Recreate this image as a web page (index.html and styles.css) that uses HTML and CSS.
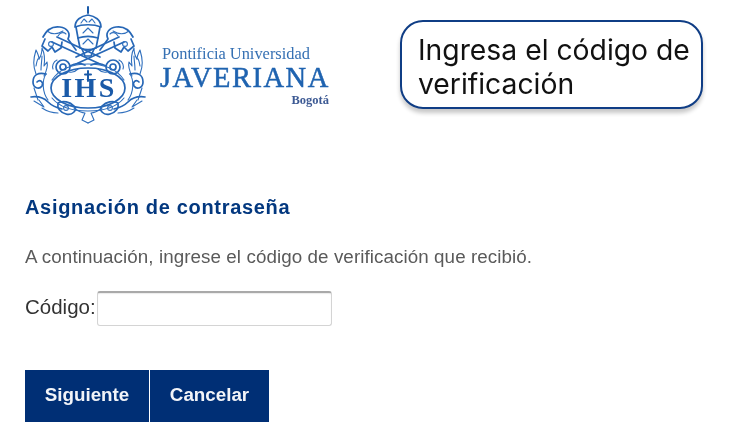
FILE: index.html
```html
<!DOCTYPE html>
<html lang="es">
<head>
<meta charset="utf-8">
<title>Asignación de contraseña</title>
<link rel="stylesheet" href="styles.css">
</head>
<body>
<header class="top">
  <div class="logo">
    <svg class="crest" viewBox="30 5 118 120" width="118" height="120" aria-hidden="true">
      <defs>
        <g id="half">
          <!-- key -->
          <path class="s2" d="M52 42 L100 64"/>
          <path class="s2" d="M57 37 L100 57"/>
          <path class="s2" d="M43 37 C47 29 53 26 60 27 C67 28 71 33 68 39 L76 50"/>
          <path class="s1" d="M47 31 C52 35 58 34 63 31 M58 36 C60 32 64 32 66 34"/>
          <path class="s2" d="M45 39 L42 46 L48 51 L52 47 L55 52 L61 48 L62 42"/>
          <circle class="s1" cx="51" cy="44" r="2.4"/>
          <!-- flames -->
          <path class="s1" d="M36 74 C33 66 33 60 36 50 C38 54 39 56 39 59 C41 56 42 52 42 48 C45 54 45 60 44 66 L47 62 C48 66 46 72 44 76"/>
          <path class="s1" d="M36 66 C37 60 38 58 39 59 M41 70 C41 64 42 60 42 56"/>
          <!-- scroll -->
          <path class="s2" d="M46 74 C38 72 33 75 33 82 C33 88 39 90 42 86 C44 82 40 79 37 82"/>
          <path class="s1" d="M46 74 C42 80 42 92 48 100 M34 88 L38 100"/>
          <!-- rose -->
          <circle class="s2" cx="63" cy="67" r="7"/>
          <circle class="s2" cx="63" cy="67" r="3"/>
          <path class="s1" d="M57 60 C53 62 52 66 53 69 M69 72 C73 73 76 71 78 69"/>
          <path class="s2" d="M70 66 C75 63 80 63 85 65"/>
          <!-- bottom ribbon -->
          <path class="s2" d="M31 97 C38 96 44 98 48 102 C52 106 58 108 62 109"/>
          <path class="s1" d="M34 101 L44 107 L39 100 M42 108 C48 112 54 113 58 113"/>
          <path class="s2" d="M58 103 C63 100 70 102 74 106 C78 110 72 116 66 114 C60 112 57 108 58 103Z"/>
          <circle class="s1" cx="66" cy="108" r="2.4"/>
          <path class="s1" d="M74 108 C78 111 82 113 85 113 L82 120 L88 123"/>
        </g>
      </defs>
      <!-- tiara -->
      <g>
        <path class="cross" d="M88 7 V13"/>
        <path class="s2" d="M75 27 C75 20 81 16 88 15 C95 16 101 20 101 27 C94 24 82 24 75 27Z"/>
        <path class="s2" d="M76 27 L78 38 C84 36 92 36 98 38 L100 27"/>
        <path class="s2" d="M78 38 L80 48 C85 50 91 50 96 48 L98 38"/>
        <path class="s1" d="M83 33 L88 28 L93 33 M83 44 L88 39 L93 44 M81 23 L84 19 L87 22 M95 23 L92 19 L89 22"/>
        <path class="s2" d="M82 49 L85 56 H91 L94 49"/>
      </g>
      <use href="#half"/>
      <use href="#half" transform="matrix(-1 0 0 1 176 0)"/>
      <!-- oval cartouche -->
      <ellipse class="s2" cx="88" cy="88" rx="37" ry="20"/>
      <path class="s1" d="M52 80 C60 68 74 64 88 64 M124 80 C116 68 102 64 88 64"/>
      <path class="s1" d="M52 98 C60 108 74 111 88 111 C102 111 116 108 124 98"/>
      <text class="ihs" x="89" y="97" text-anchor="middle">IHS</text>
      <path class="cross" d="M88 71 V81 M85 74.500 H91"/>
    </svg>
    <div class="wordmark">
      <span class="wm-top">Pontificia Universidad</span>
      <span class="wm-name">JAVERIANA</span>
      <span class="wm-city">Bogotá</span>
    </div>
  </div>
  <div class="callout">Ingresa el código de verificación</div>
</header>
<main class="content">
  <h1 class="title">Asignación de contraseña</h1>
  <p class="lead">A continuación, ingrese el código de verificación que recibió.</p>
  <form class="form">
    <div class="field">
      <label class="label" for="codigo">Código:</label>
      <input class="input" id="codigo" type="text">
    </div>
    <div class="actions">
      <button class="btn btn-first" type="button">Siguiente</button>
      <button class="btn btn-second" type="button">Cancelar</button>
    </div>
  </form>
</main>
</body>
</html>
```
FILE: styles.css
```css
* { box-sizing: border-box; }
html, body { margin: 0; padding: 0; background: #fff; }
body { width: 731px; height: 440px; overflow: hidden; font-family: "Liberation Sans", Arial, sans-serif; }

.top { display: flex; align-items: flex-start; padding: 5px 0 0 30px; height: 195px; }
.logo { display: flex; align-items: flex-start; width: 371px; }
.crest { display: block; flex: none; filter: blur(0.35px); }
.s1, .s2, .cross { fill: none; stroke: #2f6fbd; stroke-linecap: round; stroke-linejoin: round; }
.s1 { stroke-width: 1.1; }
.s2 { stroke-width: 1.7; stroke: #2767b6; }
.cross { stroke-width: 2; stroke: #1a5aa8; }
.ihs { font-family: "Liberation Serif", serif; font-weight: 700; font-size: 28px; letter-spacing: 2.5px; fill: #1a5aa8; }

.wordmark { display: flex; flex-direction: column; margin: 39px 0 0 12px; width: 172px; font-family: "Liberation Serif", serif; color: #2a67ad; filter: blur(0.3px); }
.wm-top { font-size: 16.4px; line-height: 20px; padding-left: 2px; white-space: nowrap; color: #3570b3; }
.wm-name { font-size: 28.500px; line-height: 27px; letter-spacing: 1.5px; white-space: nowrap; color: #1f63b0; -webkit-text-stroke: 0.5px #1f63b0; }
.wm-city { margin-top: 2px; font-size: 12.500px; line-height: 14px; font-weight: 700; text-align: right; padding-right: 3px; color: #3d5a94; }

.callout { width: 303px; height: 89px; margin: 15px 0 0 -1px; padding: 11px 8px 0 16px; border: 2px solid #0f3d85; border-radius: 23px; background: #fff; box-shadow: 0 4px 4px rgba(0, 0, 0, .22); font-family: Inter, sans-serif; font-size: 28.300px; line-height: 34px; color: #111; filter: blur(0.2px); }

.content { padding-left: 25px; filter: blur(0.25px); }
.title { margin: 0; font-size: 20px; line-height: 24px; font-weight: 700; letter-spacing: 0.68px; color: #03387f; }
.lead { margin: 28px 0 0; font-size: 18.800px; line-height: 20px; letter-spacing: 0.08px; color: #5a5a5a; }
.field { display: flex; align-items: center; margin-top: 24px; }
.label { font-size: 20.500px; line-height: 31px; padding-bottom: 4px; color: #333; width: 72px; }
.input { width: 235px; height: 35px; padding: 0 6px; background: #fff; border: 1px solid #d4d4d4; border-top: 2px solid #a9a9a9; border-radius: 3px; box-shadow: inset 0 1px 1px rgba(0, 0, 0, .08); }
.actions { display: flex; gap: 1px; margin-top: 44px; }
.btn { height: 52px; padding: 0 0 2px; border: 0; background: #002f75; color: #f2f4f8; font-family: "Liberation Sans", Arial, sans-serif; font-size: 18.800px; font-weight: 700; }
.btn-first { width: 124px; }
.btn-second { width: 119px; }
```
